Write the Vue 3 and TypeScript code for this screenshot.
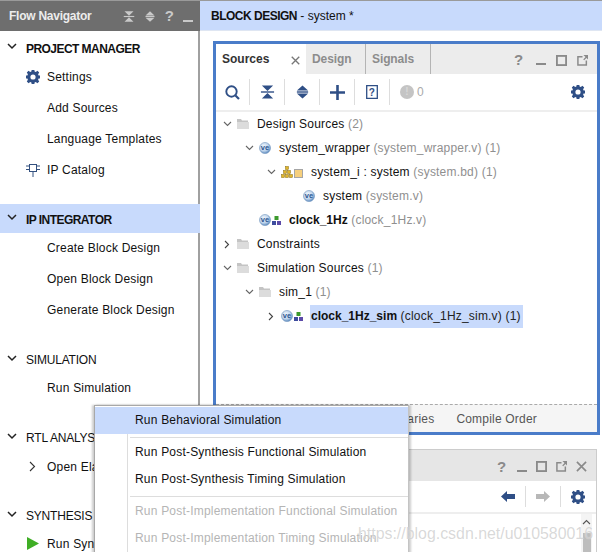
<script setup lang="ts">
interface NavItem { label: string; icon?: string }
interface NavSection { title: string; bold?: boolean; active?: boolean; gap: number; items: NavItem[] }
const nav: NavSection[] = [
  { title: 'PROJECT MANAGER', bold: true, gap: 19, items: [
    { label: 'Settings', icon: 'gear' }, { label: 'Add Sources' }, { label: 'Language Templates' }, { label: 'IP Catalog', icon: 'ip' } ] },
  { title: 'IP INTEGRATOR', bold: true, active: true, gap: 20, items: [
    { label: 'Create Block Design' }, { label: 'Open Block Design' }, { label: 'Generate Block Design' } ] },
  { title: 'SIMULATION', gap: 20, items: [ { label: 'Run Simulation' } ] },
  { title: 'RTL ANALYSIS', gap: 19, items: [ { label: 'Open Elaborated Design', icon: 'more' } ] },
  { title: 'SYNTHESIS', gap: 0, items: [ { label: 'Run Synthesis', icon: 'play' } ] },
]
interface Row { indent: number; arrow: '' | 'down' | 'right'; kind: string; name: string; bold?: boolean; detail?: string; selected?: boolean }
const rows: Row[] = [
  { indent: 5, arrow: 'down', kind: 'folder', name: 'Design Sources', detail: '(2)' },
  { indent: 27, arrow: 'down', kind: 've', name: 'system_wrapper', detail: '(system_wrapper.v) (1)' },
  { indent: 49, arrow: 'down', kind: 'bd', name: 'system_i : system', detail: '(system.bd) (1)' },
  { indent: 71, arrow: '', kind: 've', name: 'system', detail: '(system.v)' },
  { indent: 27, arrow: '', kind: 'vemod', name: 'clock_1Hz', bold: true, detail: '(clock_1Hz.v)' },
  { indent: 5, arrow: 'right', kind: 'folder', name: 'Constraints' },
  { indent: 5, arrow: 'down', kind: 'folder', name: 'Simulation Sources', detail: '(1)' },
  { indent: 27, arrow: 'down', kind: 'folder', name: 'sim_1', detail: '(1)' },
  { indent: 49, arrow: 'right', kind: 'vemod', name: 'clock_1Hz_sim', bold: true, detail: '(clock_1Hz_sim.v) (1)', selected: true },
]
const menu = [
  { label: 'Run Behavioral Simulation', active: true, sep: true },
  { label: 'Run Post-Synthesis Functional Simulation' },
  { label: 'Run Post-Synthesis Timing Simulation', sep: true },
  { label: 'Run Post-Implementation Functional Simulation', disabled: true },
  { label: 'Run Post-Implementation Timing Simulation', disabled: true },
]
</script>

<template>
  <div class="page">
    <svg class="defs" width="0" height="0">
      <defs>
        <radialGradient id="veg" cx="40%" cy="35%" r="70%">
          <stop offset="0" stop-color="#f4f8fd" /><stop offset=".6" stop-color="#bcd2ea" /><stop offset="1" stop-color="#4e7fb8" />
        </radialGradient>
        <symbol id="gear" viewBox="0 0 14 14">
          <path fill="#2f4f86" fill-rule="evenodd" d="M5.700 0h2.600l.3 1.900 1.200.5L11.400 1.300l1.800 1.800-1.100 1.600.5 1.200 1.900.3v2.600l-1.900.3-.5 1.200 1.100 1.600-1.800 1.800-1.600-1.100-1.200.5-.3 1.900H5.700l-.3-1.900-1.200-.5-1.600 1.100L.8 11.900l1.100-1.600-.5-1.200L-.5 8.800V6.200l1.900-.3.5-1.200L.8 3.100 2.600 1.300l1.600 1.100 1.200-.5zM7 4.900a2.600 2.600 0 1 0 0 5.200 2.600 2.600 0 0 0 0-5.200z" transform="translate(0 -.5)" />
        </symbol>
        <symbol id="collapse" viewBox="0 0 16 16">
          <path fill="currentColor" d="M2 1h12L8 7zM2 15h12L8 9z" /><path stroke="currentColor" stroke-width="1.500" d="M1 8h14" />
        </symbol>
        <symbol id="expand" viewBox="0 0 16 16">
          <path fill="currentColor" d="M8 1l6 5.500H2zM8 15l-6-5.500h12z" /><path stroke="currentColor" stroke-width="1.500" d="M2 8h12" />
        </symbol>
        <symbol id="winmax" viewBox="0 0 12 12"><rect x="1" y="1" width="10" height="10" fill="none" stroke="currentColor" stroke-width="2" /></symbol>
        <symbol id="winpop" viewBox="0 0 12 12">
          <path fill="none" stroke="currentColor" stroke-width="1.600" d="M6 1.800H1V11h9.200V6" /><path fill="currentColor" d="M7 0h5v5l-1.700-1.700-2.500 2.500-1-1 2.500-2.500z" />
        </symbol>
        <symbol id="winx" viewBox="0 0 12 12"><path stroke="currentColor" stroke-width="1.800" d="M1 1l10 10M11 1L1 11" /></symbol>
      </defs>
    </svg>

    <aside class="nav">
      <header class="nav-head">
        <span class="nav-title">Flow Navigator</span>
        <span class="nav-tools">
          <svg width="12" height="13"><use href="#collapse" /></svg>
          <svg width="12" height="13"><use href="#expand" /></svg>
          <span class="q">?</span>
          <span class="dash"></span>
        </span>
      </header>
      <div class="nav-body">
        <section v-for="s in nav" :key="s.title" class="nav-sec" :style="{ marginBottom: s.gap + 'px' }">
          <div class="sec-head" :class="{ active: s.active, bold: s.bold }">
            <svg class="sec-chev" width="10" height="7" viewBox="0 0 10 7"><path d="M1 1l4 4 4-4" fill="none" stroke="#222" stroke-width="1.500" /></svg>
            {{ s.title }}
          </div>
          <div v-for="it in s.items" :key="it.label" class="nav-item">
            <span class="nav-ico">
              <svg v-if="it.icon === 'gear'" width="14" height="14"><use href="#gear" /></svg>
              <svg v-else-if="it.icon === 'ip'" width="14" height="14" viewBox="0 0 14 14">
                <rect x="3.500" y="1.500" width="7" height="7" fill="#fff" stroke="#33507f" />
                <path stroke="#33507f" d="M0 3h3M0 6.500h3M11 3h3M11 6.500h3M7 9v5" />
              </svg>
              <svg v-else-if="it.icon === 'more'" class="more" width="7" height="11" viewBox="0 0 7 11"><path d="M1 1l4.500 4.500L1 10" fill="none" stroke="#333" stroke-width="1.100" /></svg>
              <svg v-else-if="it.icon === 'play'" class="play" width="12" height="13" viewBox="0 0 12 13"><path d="M0 0l12 6.500L0 13z" fill="#3fae25" /></svg>
            </span>
            {{ it.label }}
          </div>
        </section>
      </div>
    </aside>

    <main class="main">
      <header class="doc-head"><b class="doc-b">BLOCK DESIGN</b>&nbsp;- system *</header>

      <section class="sources">
        <div class="tabs">
          <div class="tab on">Sources <svg class="tab-x" width="9" height="9"><use href="#winx" /></svg></div>
          <div class="tab t-design">Design</div>
          <div class="tab t-signals">Signals</div>
          <div class="win-tools">
            <span class="q">?</span><span class="dash"></span>
            <svg width="11" height="11"><use href="#winmax" /></svg>
            <svg width="11" height="11"><use href="#winpop" /></svg>
          </div>
        </div>
        <div class="toolbar">
          <span class="tb"><svg width="15" height="15" viewBox="0 0 15 15"><circle cx="6.500" cy="6.500" r="5.200" fill="none" stroke="#2f4f86" stroke-width="1.900" /><path d="M10.500 10.500l3.500 3.500" stroke="#2f4f86" stroke-width="2.200" /></svg></span>
          <span class="tb"><svg class="blue" width="15" height="16"><use href="#collapse" /></svg></span>
          <span class="tb"><svg class="blue" width="15" height="16"><use href="#expand" /></svg></span>
          <span class="tb"><svg width="15" height="15" viewBox="0 0 15 15"><path d="M6.200 0h2.600v6.200H15v2.600H8.800V15H6.200V8.800H0V6.200h6.200z" fill="#2f4f86" /></svg></span>
          <span class="tb"><svg width="12" height="14" viewBox="0 0 12 14"><path d="M.7.700h10.600v12.600H.7z" fill="#fff" stroke="#2f4f86" stroke-width="1.300" /><text x="6" y="10.500" text-anchor="middle" class="doc-q">?</text></svg></span>
          <span class="tb last"><span class="dot">!</span><span class="zero">0</span></span>
          <svg class="tb-gear" width="14" height="14"><use href="#gear" /></svg>
        </div>
        <div class="tree">
          <div v-for="r in rows" :key="r.name" class="row" :style="{ paddingLeft: r.indent + 'px' }">
            <span class="chev">
              <svg v-if="r.arrow === 'down'" width="9" height="6" viewBox="0 0 9 6"><path d="M1 1l3.500 3.500L8 1" fill="none" stroke="#666" stroke-width="1.100" /></svg>
              <svg v-else-if="r.arrow === 'right'" width="6" height="9" viewBox="0 0 6 9"><path d="M1 1l3.500 3.500L1 8" fill="none" stroke="#444" stroke-width="1.100" /></svg>
            </span>
            <span class="ico" :class="r.kind">
              <svg v-if="r.kind === 'folder'" width="12" height="10" viewBox="0 0 12 10">
                <path d="M0 0h4l1 1.500h6V3H0z" fill="#c4c4c4" /><path d="M0 3h12v7H0z" fill="#dcdcdc" />
              </svg>
              <template v-if="r.kind === 've' || r.kind === 'vemod'">
                <svg width="12" height="12" viewBox="0 0 12 12">
                  <circle cx="6" cy="6" r="5.500" fill="url(#veg)" stroke="#6f94bd" stroke-width=".6" />
                  <text x="6" y="8.300" text-anchor="middle" class="ve">ve</text>
                </svg>
              </template>
              <svg v-if="r.kind === 'vemod'" class="mod" width="9" height="9" viewBox="0 0 9 9">
                <rect x="2.500" width="4" height="4" fill="#3d9a2d" /><rect y="5" width="4" height="4" fill="#3d4c9e" /><rect x="5" y="5" width="4" height="4" fill="#5b4aa8" />
              </svg>
              <svg v-if="r.kind === 'bd'" width="22" height="12" viewBox="0 0 22 12">
                <g fill="#e0b52a" stroke="#8a6d10" stroke-width=".5">
                  <rect x="4.500" y=".5" width="3" height="3" /><rect x="2.500" y="4.500" width="3" height="3" /><rect x="6.500" y="4.500" width="3" height="3" />
                  <rect x=".5" y="8.500" width="3" height="3" /><rect x="4.500" y="8.500" width="3" height="3" /><rect x="8.500" y="8.500" width="3" height="3" />
                </g>
                <rect x="13.500" y="3.500" width="8" height="8" fill="#f6cf7c" stroke="#a5a5a5" />
              </svg>
            </span>
            <span class="label" :class="{ sel: r.selected }"><span :class="{ strong: r.bold }">{{ r.name }}</span><span v-if="r.detail" class="detail">{{ ' ' + r.detail }}</span></span>
          </div>
        </div>
        <footer class="bottom-tabs">
          <span>Hierarchy</span><span>IP Sources</span><span>Libraries</span><span>Compile Order</span>
        </footer>
      </section>

      <section class="lower">
        <div class="lower-tabs">
          <span class="q">?</span><span class="dash"></span>
          <svg width="11" height="11"><use href="#winmax" /></svg>
          <svg width="11" height="11"><use href="#winpop" /></svg>
          <svg width="11" height="11"><use href="#winx" /></svg>
        </div>
        <div class="lower-bar">
          <svg width="14" height="11" viewBox="0 0 14 11"><path d="M0 5.500L6 0v3h8v5H6v3z" fill="#2f4f86" /></svg>
          <i></i>
          <svg width="14" height="11" viewBox="0 0 14 11"><path d="M14 5.500L8 0v3H0v5h8v3z" fill="#b8b8b8" /></svg>
          <i></i>
          <svg width="14" height="14"><use href="#gear" /></svg>
        </div>
        <div class="lower-body">
          <div class="scroll">
            <svg width="9" height="6" viewBox="0 0 9 6"><path d="M1 5l3.500-3.500L8 5" fill="none" stroke="#555" stroke-width="1.100" /></svg>
            <div class="thumb"></div>
          </div>
        </div>
      </section>
    </main>

    <div class="menu">
      <div class="gutter"></div>
      <template v-for="m in menu" :key="m.label">
        <div class="mi" :class="{ on: m.active, off: m.disabled }">{{ m.label }}</div>
        <div v-if="m.sep" class="msep"></div>
      </template>
    </div>

    <div class="mark">https://blog.csdn.net/u010580016</div>
  </div>
</template>

<style>
html, body { margin: 0; background: #fff; overflow: hidden; }
</style>

<style scoped>
.page {
  position: relative; display: flex; width: 602px; height: 552px; overflow: hidden;
  border-top: 1px solid #9a9a9a; box-sizing: border-box; background: #fff; color: #111;
  font: 12px/16px "Liberation Sans", Arial, sans-serif; letter-spacing: .2px;
}
.defs { position: absolute; }
.nav { width: 200px; flex: none; box-sizing: border-box; border-right: 2px solid #a0a0a0; }
.nav-head { height: 30px; background: #6e6e6e; color: #ececec; display: flex; align-items: center; justify-content: space-between; padding: 0 7px 0 9px; margin-right: -2px; font-weight: bold; letter-spacing: -.25px; }
.nav-tools { display: flex; align-items: center; gap: 9px; color: #c9c9c9; }
.q { font-weight: bold; font-size: 15px; line-height: 14px; letter-spacing: 0; }
.dash { width: 10px; height: 2px; background: currentColor; align-self: flex-end; margin-bottom: 2px; }
.nav-tools .dash { margin-bottom: 1px; }
.nav-body { padding-top: 2px; }
.sec-head { height: 29px; box-sizing: border-box; margin: 0 -2px -1px 0; display: flex; align-items: center; padding-left: 26px; position: relative; letter-spacing: -.2px; }
.sec-head.bold { font-weight: bold; letter-spacing: -.55px; padding-top: 2px; }
.sec-head.active { background: #c8dafc; }
.sec-chev { position: absolute; left: 7px; top: 10px; }
.nav-item { height: 31px; display: flex; align-items: center; }
.nav-sec:nth-child(n+3) .nav-item { margin-top: -1px; }
.nav-sec:nth-child(3) .nav-item { margin-top: -2px; }
.nav-sec:nth-child(5) .nav-item { margin-top: -2px; }
.nav-ico { width: 47px; flex: none; display: flex; align-items: center; padding-left: 26px; box-sizing: border-box; }
.nav-ico .more { margin-left: 3px; }
.nav-ico .play { margin-left: 1px; }
.main { flex: 1; min-width: 0; display: flex; flex-direction: column; }
.doc-head { height: 29px; flex: none; background: #c8dafc; box-shadow: 0 1px 0 #dfe6f2; display: flex; align-items: center; padding-left: 11px; letter-spacing: 0; }
.doc-b { font-weight: bold; letter-spacing: -.5px; }
.sources { margin: 11px 2px 0 13px; height: 394px; flex: none; box-sizing: border-box; border: 3px solid #4a7cc9; display: flex; flex-direction: column; }
.tabs { height: 30px; flex: none; background: #ececec; display: flex; position: relative; }
.tab { display: flex; align-items: center; font-weight: bold; color: #8c8c8c; box-sizing: border-box; padding-left: 6px; border-right: 1px solid #b4b4b4; letter-spacing: -.1px; }
.tab.on { width: 90px; background: #fff; color: #333; border: 0; position: relative; letter-spacing: 0; }
.tab-x { position: absolute; right: 6px; top: 12px; color: #777; }
.t-design { width: 60px; }
.t-signals { width: 65px; }
.win-tools { margin-left: auto; display: flex; align-items: center; gap: 10px; padding: 2px 9px 0 0; color: #8a8a8a; }
.win-tools .q { width: 12px; }
.lower-tabs .q { width: 11px; }
.win-tools .dash, .lower-tabs .dash { margin-bottom: 9px; }
.toolbar { height: 36px; flex: none; display: flex; align-items: center; border-bottom: 2px solid #eee; padding-right: 12px; }
.tb { width: 35px; height: 26px; display: flex; align-items: center; justify-content: center; border-right: 1px solid #ddd; box-sizing: border-box; flex: none; }
.tb:first-child { width: 34px; }
.tb.last { border: 0; width: 55px; gap: 3px; justify-content: flex-start; padding-left: 10px; }
.blue { color: #2f4f86; }
.doc-q { font: bold 10px "Liberation Sans", sans-serif; fill: #2f4f86; }
.dot { width: 14px; height: 14px; border-radius: 50%; background: #c4c4c4; color: #d8d8d8; font-size: 10px; line-height: 14px; text-align: center; font-weight: bold; }
.zero { color: #aaa; letter-spacing: 0; }
.tb-gear { margin-left: auto; }
.tree { flex: 1; min-height: 0; }
.row { height: 24px; display: flex; align-items: center; white-space: pre; }
.chev { width: 12px; flex: none; display: flex; justify-content: center; }
.ico { margin: 0 8px 0 4px; display: flex; align-items: center; flex: none; }
.ico.folder { width: 12px; }
.ico .mod { margin-left: 1px; }
.ve { font: bold 7.500px "Liberation Sans", sans-serif; fill: #2a5590; }
.label { display: inline-block; height: 23px; line-height: 23px; }
.label.sel { background: #c8dafc; margin-left: -1px; padding-left: 1px; width: 212px; }
.strong { font-weight: bold; letter-spacing: 0; }
.detail { color: #8f8f8f; }
.sel .detail { color: #222; }
.bottom-tabs { height: 27px; flex: none; background: #f5f5f5; border-top: 1px dashed #aaa; display: flex; align-items: center; justify-content: flex-end; gap: 22px; padding-right: 60px; color: #555; }
.lower { margin: 14px 5px 0 13px; flex: 1; min-height: 0; border: 1px solid #ccc; border-bottom: 0; display: flex; flex-direction: column; }
.lower-tabs { height: 31px; padding-top: 2px; box-sizing: border-box; flex: none; background: #e6e6e6; display: flex; align-items: center; justify-content: flex-end; gap: 9px; padding-right: 9px; color: #8a8a8a; }
.lower-bar { height: 31px; flex: none; border-bottom: 2px solid #eee; display: flex; align-items: center; justify-content: flex-end; padding-right: 11px; gap: 10px; }
.lower-bar i { width: 1px; height: 21px; background: #ddd; }
.lower-body { flex: 1; min-height: 0; display: flex; justify-content: flex-end; padding-right: 4px; }
.scroll { width: 11px; background: #f4f4f4; box-sizing: border-box; display: flex; flex-direction: column; align-items: center; padding-top: 5px; gap: 8px; }
.thumb { width: 8px; flex: 1; background: #bdbdbd; }
.menu { position: absolute; left: 94px; top: 404px; width: 315px; height: 160px; box-sizing: border-box; background: #fff; border: 1px solid #a8a8a8; border-right-color: #c4c4c4; box-shadow: -2px 0 2px rgba(0,0,0,.2), 2px 0 2px rgba(0,0,0,.2); padding-top: 1px; }
.gutter { position: absolute; left: 32px; top: 28px; bottom: 0; width: 1px; background: #ddd; }
.mi { height: 27px; line-height: 27px; padding-left: 40px; white-space: nowrap; position: relative; }
.mi.on { background: #c8dafc; }
.mi.off { color: #b5b5b5; }
.msep { height: 1px; margin: 3px 0 1px 35px; background: #ddd; position: relative; }
.mark { position: absolute; left: 358px; top: 524px; font-size: 15.900px; line-height: 18px; letter-spacing: 0; color: rgba(170,170,170,.45); text-shadow: 0 0 1px rgba(255,255,255,.8); white-space: nowrap; pointer-events: none; }
</style>
